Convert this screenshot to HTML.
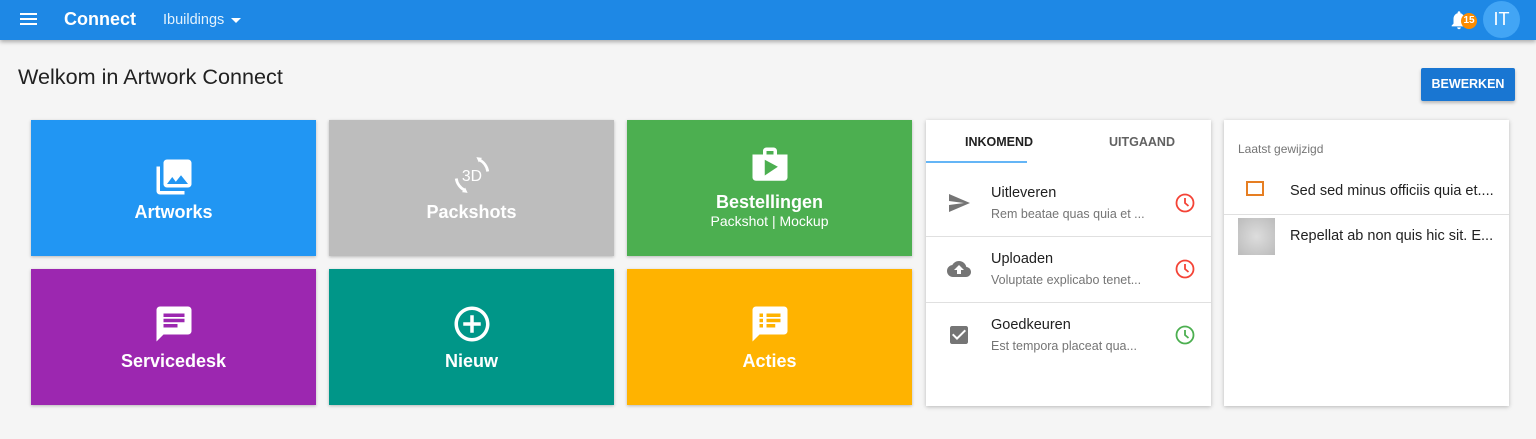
<!DOCTYPE html>
<html><head><meta charset="utf-8">
<style>
*{box-sizing:border-box;margin:0;padding:0}
body{width:1536px;height:439px;background:#f5f5f5;font-family:"Liberation Sans",Roboto,sans-serif;position:relative;overflow:hidden}
.bar{position:absolute;left:0;top:0;width:1536px;height:40px;background:#1e88e5;box-shadow:0 2px 4px rgba(0,0,0,.3);color:#fff}
.abs{position:absolute}
.tile{position:absolute;width:285px;height:136px;color:#fff;text-align:center;box-shadow:0 1px 3px rgba(0,0,0,.25)}
.tile svg{position:absolute;left:122px;width:42px;height:42px;fill:#fff}
.tile .lb{position:absolute;left:0;right:0;font-size:18px;font-weight:bold}
.card{position:absolute;background:#fff;box-shadow:0 1px 4px rgba(0,0,0,.25);top:120px;height:286px;width:285px}
.row{position:absolute;left:0;right:0;height:66px;border-bottom:1px solid #e0e0e0}
.row svg.ic{position:absolute;left:21px;top:20px;width:24px;height:24px;fill:#757575}
.row .t{position:absolute;left:65px;top:14px;font-size:14.5px;color:#212121}
.row .s{position:absolute;left:65px;top:36px;font-size:12.5px;color:#757575}
.clock{position:absolute;left:249px;top:22px;width:20px;height:20px}
</style></head><body>
<div class="bar">
<div class="abs" style="left:20px;top:13px;width:17px;height:2px;background:#fff;box-shadow:0 5px 0 #fff,0 10px 0 #fff"></div>
<div class="abs" style="left:64px;top:9px;font-size:18px;font-weight:bold">Connect</div>
<div class="abs" style="left:163px;top:12px;font-size:14.5px;color:#e3f2fd">Ibuildings</div>
<div class="abs" style="left:231px;top:18px;border-left:5px solid transparent;border-right:5px solid transparent;border-top:5px solid #fff"></div>
<svg class="abs" style="left:1448px;top:9px;width:22px;height:22px;fill:#fff" viewBox="0 0 24 24"><path d="M12 22c1.1 0 2-.9 2-2h-4c0 1.1.89 2 2 2zm6-6v-5c0-3.07-1.64-5.64-4.5-6.32V4c0-.83-.67-1.5-1.5-1.5s-1.5.67-1.5 1.5v.68C7.63 5.36 6 7.92 6 11v5l-2 2v1h16v-1l-2-2z"/></svg>
<div class="abs" style="left:1461px;top:13px;width:16px;height:16px;border-radius:50%;background:#fb8c00;font-size:10px;font-weight:bold;text-align:center;line-height:16px">15</div>
<div class="abs" style="left:1483px;top:1px;width:37px;height:37px;border-radius:50%;background:#42a5f5;font-size:18px;text-align:center;line-height:37px">IT</div>
</div>
<div class="abs" style="left:18px;top:64px;font-size:21.6px;color:#212121">Welkom in Artwork Connect</div>
<div class="abs" style="left:1421px;top:68px;width:94px;height:33px;background:#1976d2;color:#fff;font-size:12.5px;font-weight:bold;text-align:center;line-height:33px;border-radius:2px;box-shadow:0 2px 3px rgba(0,0,0,.25)">BEWERKEN</div>

<div class="tile" style="left:31px;top:120px;background:#2196f3"><svg style="top:36px" viewBox="0 0 24 24"><path d="M22 16V4c0-1.1-.9-2-2-2H8c-1.1 0-2 .9-2 2v12c0 1.1.9 2 2 2h12c1.1 0 2-.9 2-2zm-11-4l2.03 2.71L16 11l4 5H8l3-4zM2 6v14c0 1.1.9 2 2 2h14v-2H4V6H2z"/></svg><div class="lb" style="top:82px">Artworks</div></div>
<div class="tile" style="left:329px;top:120px;background:#bdbdbd"><svg style="top:34px" viewBox="0 0 24 24"><path d="M16 3.2A9 9 0 0 1 21 10" stroke="#fff" stroke-width="1.6" fill="none"/><path d="M14.5 1.8l3.2.4-1.8 2.6z"/><path d="M8 20.8A9 9 0 0 1 3 14" stroke="#fff" stroke-width="1.6" fill="none"/><path d="M9.5 22.2l-3.2-.4 1.8-2.6z"/><text x="12" y="15.5" font-size="9" text-anchor="middle" fill="#fff" font-family="Liberation Sans">3D</text></svg><div class="lb" style="top:82px">Packshots</div></div>
<div class="tile" style="left:627px;top:120px;background:#4caf50"><svg style="top:24px" viewBox="0 0 24 24"><path d="M16 6V4c0-1.11-.89-2-2-2h-4c-1.11 0-2 .89-2 2v2H2v13c0 1.11.89 2 2 2h16c1.11 0 2-.89 2-2V6h-6zm-6-2h4v2h-4V4zM9 18V9l7.5 4L9 18z"/></svg><div class="lb" style="top:72px">Bestellingen</div><div class="abs" style="left:0;right:0;top:93px;font-size:14px">Packshot | Mockup</div></div>
<div class="tile" style="left:31px;top:269px;background:#9c27b0"><svg style="top:34px" viewBox="0 0 24 24"><path d="M20 2H4c-1.1 0-1.99.9-1.99 2L2 22l4-4h14c1.1 0 2-.9 2-2V4c0-1.1-.9-2-2-2zM6 9h12v2H6V9zm8 5H6v-2h8v2zm4-6H6V6h12v2z"/></svg><div class="lb" style="top:82px">Servicedesk</div></div>
<div class="tile" style="left:329px;top:269px;background:#009688"><svg style="top:34px" viewBox="0 0 24 24"><path d="M13 7h-2v4H7v2h4v4h2v-4h4v-2h-4V7zm-1-5C6.48 2 2 6.48 2 12s4.48 10 10 10 10-4.48 10-10S17.52 2 12 2zm0 18c-4.41 0-8-3.59-8-8s3.59-8 8-8 8 3.59 8 8-3.59 8-8 8z"/></svg><div class="lb" style="top:82px">Nieuw</div></div>
<div class="tile" style="left:627px;top:269px;background:#ffb300"><svg style="top:34px" viewBox="0 0 24 24"><path d="M20 2H4c-1.1 0-1.99.9-1.99 2L2 22l4-4h14c1.1 0 2-.9 2-2V4c0-1.1-.9-2-2-2zM8 14H6v-2h2v2zm0-3H6V9h2v2zm0-3H6V6h2v2zm7 6h-5v-2h5v2zm3-3h-8V9h8v2zm0-3h-8V6h8v2z"/></svg><div class="lb" style="top:82px">Acties</div></div>

<div class="card" style="left:926px">
<div class="abs" style="left:39px;top:15px;font-size:12.5px;font-weight:bold;color:#212121">INKOMEND</div>
<div class="abs" style="left:0;width:101px;top:41px;height:2px;background:#64b5f6"></div>
<div class="abs" style="left:183px;top:15px;font-size:12.5px;font-weight:bold;color:#616161">UITGAAND</div>
<div class="row" style="top:51px"><svg class="ic" viewBox="0 0 24 24"><path d="M2.01 21L23 12 2.01 3 2 10l15 2-15 2z"/></svg><div class="t">Uitleveren</div><div class="s">Rem beatae quas quia et ...</div><svg class="clock" viewBox="0 0 20 20" fill="none" stroke="#f44336" stroke-width="1.8"><circle cx="10" cy="10" r="8.5"/><path d="M10 5v5l3.5 3"/></svg></div>
<div class="row" style="top:117px"><svg class="ic" viewBox="0 0 24 24"><path d="M19.35 10.04C18.67 6.59 15.64 4 12 4 9.11 4 6.6 5.64 5.35 8.04 2.34 8.36 0 10.910 0 14c0 3.31 2.69 6 6 6h13c2.76 0 5-2.24 5-5 0-2.64-2.05-4.78-4.650-4.96zM14 13v4h-4v-4H7l5-5 5 5h-3z"/></svg><div class="t">Uploaden</div><div class="s">Voluptate explicabo tenet...</div><svg class="clock" viewBox="0 0 20 20" fill="none" stroke="#f44336" stroke-width="1.8"><circle cx="10" cy="10" r="8.5"/><path d="M10 5v5l3.5 3"/></svg></div>
<div class="row" style="top:183px;border:none"><svg class="ic" viewBox="0 0 24 24"><path d="M19 3H5c-1.11 0-2 .9-2 2v14c0 1.1.89 2 2 2h14c1.11 0 2-.9 2-2V5c0-1.1-.89-2-2-2zm-9 14l-5-5 1.41-1.41L10 14.17l7.59-7.59L19 8l-9 9z"/></svg><div class="t">Goedkeuren</div><div class="s">Est tempora placeat qua...</div><svg class="clock" viewBox="0 0 20 20" fill="none" stroke="#4caf50" stroke-width="1.8"><circle cx="10" cy="10" r="8.5"/><path d="M10 5v5l3.5 3"/></svg></div>
</div>

<div class="card" style="left:1224px">
<div class="abs" style="left:14px;top:22px;font-size:12px;color:#757575">Laatst gewijzigd</div>
<div class="abs" style="left:22px;top:61px;width:18px;height:15px;border:2.5px solid #e67e22"></div>
<div class="abs" style="left:66px;top:63px;font-size:14.5px;color:#212121">Sed sed minus officiis quia et....</div>
<div class="abs" style="left:0;right:0;top:94px;height:1px;background:#e0e0e0"></div>
<div class="abs" style="left:14px;top:98px;width:37px;height:37px;background:radial-gradient(#ddd,#bbb)"></div>
<div class="abs" style="left:66px;top:108px;font-size:14.5px;color:#212121">Repellat ab non quis hic sit. E...</div>
</div>
</body></html>
